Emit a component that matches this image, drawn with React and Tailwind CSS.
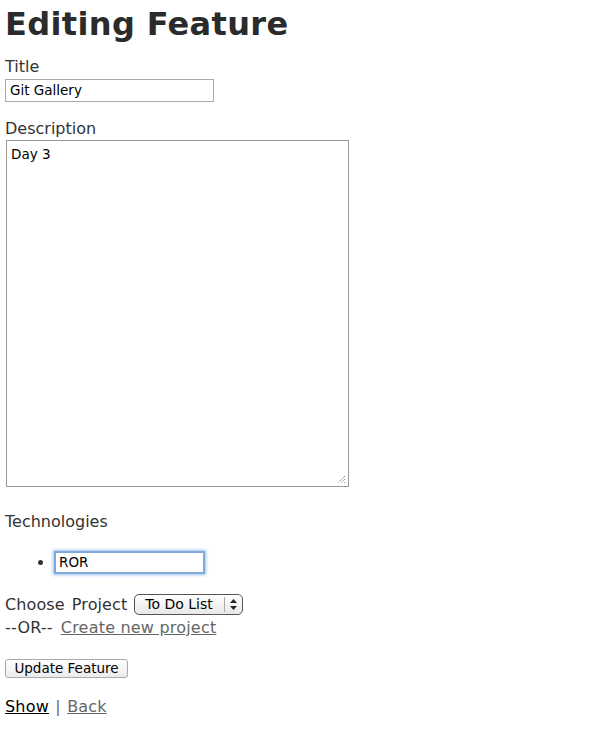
import React from "react";

export default function App() {
  return (
    <div className="min-h-[753px] w-[589px] bg-white text-[#333] pl-[5px] pt-[5px]" style={{ fontFamily: '"DejaVu Sans", Verdana, sans-serif' }}>
      <h1 className="text-[32px] font-bold leading-[38px] tracking-[0.35px] text-[#2b2b2b]">Editing Feature</h1>
      <div className="mt-[14px] text-[16px] leading-[19px]">Title</div>
      <div className="mt-[3px] w-[209px] h-[23px] border border-[#aaa] flex items-center pl-[4px] text-[13.5px] text-black">Git Gallery</div>
      <div className="mt-[17px] text-[16px] leading-[19px]">Description</div>
      <div className="relative mt-[2px] ml-[1px] w-[343px] h-[347px] border border-[#999] px-[4px] py-[5px] text-[13.5px] leading-[16px] text-black">
        Day 3
        <svg className="absolute right-[2px] bottom-[2px]" width="9" height="9" viewBox="0 0 9 9">
          <path d="M8 1 L1 8 M8 4 L4 8 M8 7 L7 8" stroke="#666" strokeWidth="1" strokeDasharray="1 1" />
        </svg>
      </div>
      <div className="mt-[25px] text-[16px] leading-[19px]">Technologies</div>
      <div className="mt-[20px] flex items-center">
        <span className="ml-[33px] w-[5px] h-[5px] rounded-full bg-[#333]"></span>
        <div className="ml-[11px] w-[151px] h-[23px] border-2 border-[#7fa7d9] shadow-[0_0_3px_1px_#9cc2ee] flex items-center px-[3px] text-[13.5px] text-black">ROR</div>
      </div>
      <div className="mt-[20px] flex items-center h-[21px] text-[16px] leading-[19px]">
        <span className="[word-spacing:2px] tracking-[0.1px]">Choose Project</span>
        <div className="ml-[7px] w-[109px] h-[21px] rounded-[5px] border border-[#555] bg-gradient-to-b from-white to-[#e8e8e8] flex items-center text-[14px] text-black">
          <span className="pl-[10px] flex-1">To Do List</span>
          <span className="w-px h-[15px] bg-[#aaa]"></span>
          <svg className="mx-[5px]" width="7" height="11" viewBox="0 0 7 11"><path d="M3.5 0 L7 4 L0 4 Z M0 7 L7 7 L3.5 11 Z" fill="#222" /></svg>
        </div>
      </div>
      <div className="mt-[3px] text-[16px] leading-[19px] tracking-[0.2px]">
        --OR--<a href="#" className="ml-[8px] text-[#666] underline">Create new project</a>
      </div>
      <button className="block mt-[22px] w-[123px] h-[19px] rounded-[3px] border border-[#aaa] bg-gradient-to-b from-white to-[#ececec] text-[13.5px] text-black leading-none">Update Feature</button>
      <div className="mt-[19px] text-[16px] leading-[19px] [word-spacing:1px] tracking-[0.2px]">
        <a href="#" className="text-black underline">Show</a> <span className="text-[#666]">|</span> <a href="#" className="text-[#666] underline">Back</a>
      </div>
    </div>
  );
}
